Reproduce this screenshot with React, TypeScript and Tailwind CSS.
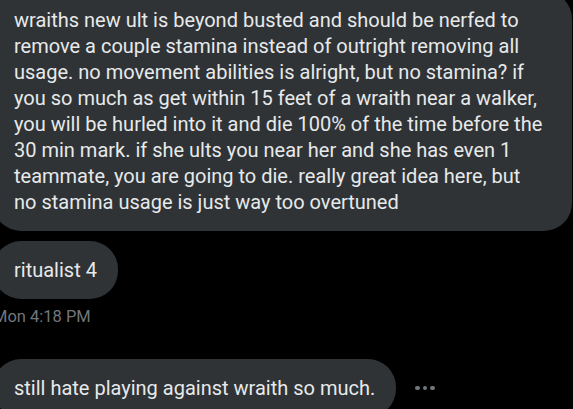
const lines = [
  "wraiths new ult is beyond busted and should be nerfed to",
  "remove a couple stamina instead of outright removing all",
  "usage. no movement abilities is alright, but no stamina? if",
  "you so much as get within 15 feet of a wraith near a walker,",
  "you will be hurled into it and die 100% of the time before the",
  "30 min mark. if she ults you near her and she has even 1",
  "teammate, you are going to die. really great idea here, but",
  "no stamina usage is just way too overtuned",
];

function MoreDots() {
  return (
    <button className="ml-[19px] flex items-center gap-[3px] py-2">
      <span className="w-[4.5px] h-[4.5px] rounded-full bg-[#71767b]" />
      <span className="w-[4.5px] h-[4.5px] rounded-full bg-[#71767b]" />
      <span className="w-[4.5px] h-[4.5px] rounded-full bg-[#71767b]" />
    </button>
  );
}

export default function App() {
  return (
    <div className="h-[409px] w-[573px] overflow-hidden bg-black font-['Roboto',sans-serif] text-[#e7e9ea]">
      <div className="-mt-[9px] -ml-[7px] flex flex-col items-start">
        <div className="w-[579px] rounded-[28px] bg-[#2f3336] px-[21px] py-4 text-[20px] leading-[26px]">
          {lines.map((l) => (
            <div key={l}>{l}</div>
          ))}
        </div>

        <div className="mt-[10px] rounded-[28px] bg-[#2f3336] px-[21px] py-4 text-[20px] leading-[26px]">
          ritualist 4
        </div>
        <div className="mt-2 text-[16.5px] leading-5 text-[#71767b]">Mon 4:18 PM</div>

        <div className="mt-8 flex items-center">
          <div className="rounded-[28px] bg-[#2f3336] px-[21px] py-4 text-[20px] leading-[26px]">
            still hate playing against wraith so much.
          </div>
          <MoreDots />
        </div>
      </div>
    </div>
  );
}
